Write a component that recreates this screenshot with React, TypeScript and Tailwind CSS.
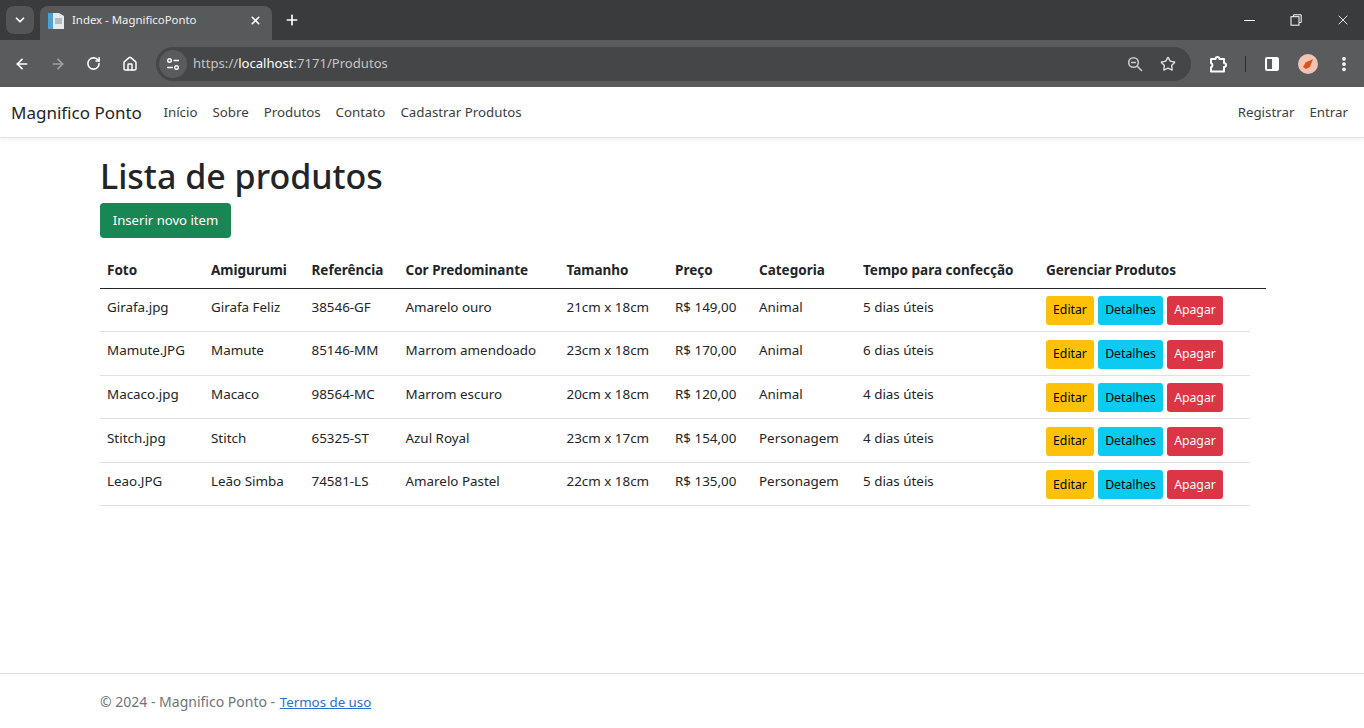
import { ArrowLeft, ArrowRight, RotateCw, Home, ChevronDown, X, Plus, Star, EllipsisVertical } from 'lucide-react';

const columns = ['Foto', 'Amigurumi', 'Referência', 'Cor Predominante', 'Tamanho', 'Preço', 'Categoria', 'Tempo para confecção', 'Gerenciar Produtos'];
const widths = ['w-[104px]', 'w-[100.5px]', 'w-[94px]', 'w-[161px]', 'w-[108.5px]', 'w-[84px]', 'w-[104px]', 'w-[183px]', 'w-[211px]'];

const produtos = [
  ['Girafa.jpg', 'Girafa Feliz', '38546-GF', 'Amarelo ouro', '21cm x 18cm', 'R$ 149,00', 'Animal', '5 dias úteis'],
  ['Mamute.JPG', 'Mamute', '85146-MM', 'Marrom amendoado', '23cm x 18cm', 'R$ 170,00', 'Animal', '6 dias úteis'],
  ['Macaco.jpg', 'Macaco', '98564-MC', 'Marrom escuro', '20cm x 18cm', 'R$ 120,00', 'Animal', '4 dias úteis'],
  ['Stitch.jpg', 'Stitch', '65325-ST', 'Azul Royal', '23cm x 17cm', 'R$ 154,00', 'Personagem', '4 dias úteis'],
  ['Leao.JPG', 'Leão Simba', '74581-LS', 'Amarelo Pastel', '22cm x 18cm', 'R$ 135,00', 'Personagem', '5 dias úteis'],
];

function BrowserChrome() {
  return (
    <div className="shrink-0 font-['Noto_Sans',sans-serif]">
      <div className="h-10 bg-[#3a3b3c] flex items-end pl-[6px]">
        <div className="w-7 h-7 mb-[6px] rounded-lg bg-[#545556] flex items-center justify-center text-white">
          <ChevronDown className="w-[14px] h-[14px]" strokeWidth={3} />
        </div>
        <div className="ml-[6px] w-[232px] h-[34px] bg-[#58595a] rounded-t-lg flex items-center pl-2 pr-[10px] pb-[6px] text-[#f1f1f1]">
          <svg width="16" height="17" viewBox="0 0 16 17" className="shrink-0">
            <path d="M0 1h11l5 3v13H0z" fill="#e4e9ee" />
            <path d="M0 1h5v16H0z" fill="#4f9fd6" />
            <path d="M7 6h7v6H7z" fill="#b4bcc2" />
          </svg>
          <span className="ml-2 text-[11.4px] flex-1 whitespace-nowrap">Index - MagnificoPonto</span>
          <X className="w-[13px] h-[13px] text-white" strokeWidth={3} />
        </div>
        <Plus className="ml-[12px] mb-[12px] w-[16px] h-[16px] text-white" strokeWidth={2.5} />
        <div className="ml-auto h-10 flex items-center text-white">
          <div className="w-[11px] h-px bg-white mr-[35px]" />
          <svg width="12" height="12" viewBox="0 0 12 12" fill="none" stroke="white" className="mr-[33px]">
            <path d="M3.5 2.5V.8h7.7v7.7H9" />
            <rect x="1" y="2.7" width="8" height="8.5" />
          </svg>
          <X className="w-[16px] h-[16px] mr-[13px]" strokeWidth={1.3} />
        </div>
      </div>
      <div className="h-[47px] bg-[#5a5b5c] flex items-center pl-[14px] pr-[11px] text-white">
        <ArrowLeft className="w-[16px] h-[16px]" strokeWidth={2.5} />
        <ArrowRight className="ml-[20px] w-[16px] h-[16px] text-[#a0a1a2]" strokeWidth={2.5} />
        <RotateCw className="ml-[20px] w-[15px] h-[15px]" strokeWidth={2.5} />
        <Home className="ml-[21px] w-[16px] h-[16px]" strokeWidth={2.2} />
        <div className="ml-[18px] flex-1 h-[34px] rounded-full bg-[#454647] flex items-center pl-[3px] pr-[15px]">
          <div className="w-7 h-7 rounded-full bg-[#5a5b5c] flex items-center justify-center">
            <svg width="14" height="14" viewBox="0 0 14 14" fill="none" stroke="white" strokeWidth="1.4">
              <circle cx="3.5" cy="3.5" r="1.8" />
              <path d="M7.500 3.500H13M1 10.500h6" />
              <circle cx="10.500" cy="10.500" r="1.8" />
            </svg>
          </div>
          <span className="ml-[6px] text-[13.1px] text-[#c4c5c6]">
            https://<span className="text-white">localhost</span>:7171/Produtos
          </span>
          <svg width="16" height="16" viewBox="0 0 16 16" fill="none" stroke="#c9cacb" strokeWidth="1.6" className="ml-auto">
            <circle cx="6.500" cy="6.500" r="4.800" />
            <path d="M4 6.500h5M10 10l5 5" />
          </svg>
          <Star className="ml-[17px] w-[16px] h-[16px] text-[#e3e3e3]" strokeWidth={2} />
        </div>
        <svg width="18" height="18" viewBox="0 0 18 18" fill="none" stroke="white" strokeWidth="2" strokeLinejoin="round" className="ml-[18px]">
          <path d="M2 4h4.500a2 2 0 0 1 4 0H15v4a2 2 0 0 1 0 4v4.500H2v-4a2.500 2.500 0 0 0 0-4.500z" />
        </svg>
        <div className="ml-[18px] w-px h-4 bg-[#2f3031]" />
        <div className="ml-[19px] w-[14px] h-[14px] rounded-[2px] border-2 border-white flex justify-end">
          <div className="w-[5px] bg-white" />
        </div>
        <div className="ml-[19px] w-5 h-5 rounded-full bg-[#f3c4b4] flex items-center justify-center">
          <svg width="12" height="12" viewBox="0 0 12 12">
            <path d="M1 9l3-5 3-1 4-2-2 5-1 3-4 2z" fill="#d9531e" />
          </svg>
        </div>
        <EllipsisVertical className="ml-[17px] w-[18px] h-[18px]" strokeWidth={3} />
      </div>
    </div>
  );
}

function Navbar() {
  return (
    <nav className="shrink-0 h-[51px] bg-white border-b border-[#dee2e6] shadow-[0_2px_5px_rgba(0,0,0,0.06)] flex items-center pl-[11px] pr-[16px] text-[13.3px] text-[#212529]">
      <span className="text-[17px] mr-[14px] pt-[1px]">Magnifico Ponto</span>
      {['Início', 'Sobre', 'Produtos', 'Contato', 'Cadastrar Produtos'].map((item) => (
        <a key={item} className="px-[7.5px] pt-[1px] text-[#3a3e42]">{item}</a>
      ))}
      <a className="ml-auto px-[7.5px] pt-[1px] text-[#3a3e42]">Registrar</a>
      <a className="pl-[7.5px] pt-[1px] text-[#3a3e42]">Entrar</a>
    </nav>
  );
}

function ProdutoActions() {
  return (
    <div className="flex gap-1 text-[12.25px]">
      <button className="w-12 h-[29px] rounded-[3px] bg-[#ffc107] text-black">Editar</button>
      <button className="w-[65px] h-[29px] rounded-[3px] bg-[#0dcaf0] text-black">Detalhes</button>
      <button className="w-14 h-[29px] rounded-[3px] bg-[#dc3545] text-white">Apagar</button>
    </div>
  );
}

export default function App() {
  return (
    <div className="h-screen flex flex-col overflow-hidden bg-white font-['Noto_Sans',sans-serif] text-[#212529]">
      <BrowserChrome />
      <Navbar />
      <main className="pl-[100px] pr-[98px] flex-1">
        <h1 className="mt-[12px] text-[34px] leading-[52px] font-medium">Lista de produtos</h1>
        <button className="mt-[1px] w-[131px] h-[35px] rounded-[4px] bg-[#198754] text-white text-[13.15px]">Inserir novo item</button>
        <table className="mt-[15px] table-fixed border-collapse text-[13.4px] text-[#212529]">
          <thead>
            <tr className="border-b border-[#212529]">
              {columns.map((col, i) => (
                <th key={col} className={`${widths[i]} h-[35px] px-[7px] text-left font-bold text-[13.5px]`}>{col}</th>
              ))}
              <th className="w-[16px]" />
            </tr>
          </thead>
          <tbody>
            {produtos.map((row) => (
              <tr key={row[0]}>
                {row.map((cell) => (
                  <td key={cell} className="h-[43.6px] px-[7px] pb-[6px] border-b border-[#dee2e6] whitespace-nowrap">{cell}</td>
                ))}
                <td className="h-[43.6px] px-[7px] pt-[1.5px] border-b border-[#dee2e6]"><ProdutoActions /></td>
                <td />
              </tr>
            ))}
          </tbody>
        </table>
      </main>
      <footer className="shrink-0 h-[55px] border-t border-[#dee2e6] pl-[100px] pt-[17px] text-[14px] text-[#6c757d]">
        © 2024 - Magnifico Ponto - <a className="ml-[1px] text-[13.3px] text-[#2a6fd0] underline">Termos de uso</a>
      </footer>
    </div>
  );
}
